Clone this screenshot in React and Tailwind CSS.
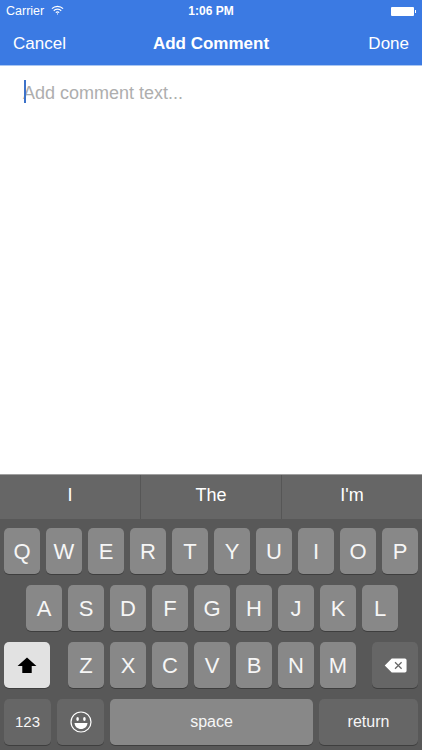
const rowOne = ["Q", "W", "E", "R", "T", "Y", "U", "I", "O", "P"]
const rowTwo = ["A", "S", "D", "F", "G", "H", "J", "K", "L"]
const rowThree = ["Z", "X", "C", "V", "B", "N", "M"]

function LetterKey({ label }) {
  return (
    <div className="w-[36px] h-[46px] rounded-[5px] bg-[#888888] shadow-[0_1px_0_#3e3e3e] flex items-center justify-center text-[#f6f6f6] text-[22px]">
      {label}
    </div>
  )
}

function StatusBar() {
  return (
    <div className="h-[22px] grid grid-cols-[1fr_auto_1fr] items-center text-white text-[12.5px] px-[6px]">
      <div className="flex items-center">
        <span>Carrier</span>
        <svg viewBox="0 0 14 10" className="w-[13px] h-[10px] ml-[7px] mb-[2px]" fill="none" stroke="white" strokeWidth="1.3">
          <path d="M1 3.6a8.4 8.4 0 0 1 12 0" />
          <path d="M3 5.8a5.6 5.6 0 0 1 8 0" />
          <path d="M5.2 7.8a2.6 2.6 0 0 1 3.6 0" />
          <circle cx="7" cy="9.2" r="0.6" fill="white" stroke="none" />
        </svg>
      </div>
      <span className="font-bold text-[12px]">1:06 PM</span>
      <div className="flex items-center justify-end">
        <div className="w-[23px] h-[9px] bg-white rounded-[1px]" />
        <div className="w-[1px] h-[3px] bg-white ml-[1px]" />
      </div>
    </div>
  )
}

export default function App() {
  return (
    <div className="w-[422px] h-[750px] overflow-hidden bg-white flex flex-col font-['Liberation_Sans',Arial,sans-serif]">
      <div className="bg-[#3b7ae3] h-[66px] border-b border-[#a9c6f2] shrink-0">
        <StatusBar />
        <div className="h-[43px] grid grid-cols-[1fr_auto_1fr] items-center px-[13px] text-white text-[17px]">
          <span>Cancel</span>
          <span className="font-bold">Add Comment</span>
          <span className="text-right">Done</span>
        </div>
      </div>

      <div className="flex-1 relative pl-[23px] pt-[16px] text-[#aeaeae] text-[18px] leading-[22px]">
        <div className="absolute left-[24px] top-[14px] w-[2px] h-[23px] bg-[#3d72c9]" />
        Add comment text...
      </div>

      <div className="h-[45px] shrink-0 bg-[#666666] border-t border-[#a0a0a0] pb-[3px] flex text-white text-[18px]">
        <div className="w-[141px] flex items-center justify-center border-r border-[#565656] -mb-[3px] pb-[3px]">I</div>
        <div className="w-[141px] flex items-center justify-center border-r border-[#565656] -mb-[3px] pb-[3px]">The</div>
        <div className="flex-1 flex items-center justify-center">I'm</div>
      </div>

      <div className="h-[231px] shrink-0 bg-[#585858] pt-[9px] px-[4px] flex flex-col gap-[11px]">
        <div className="flex justify-between">
          {rowOne.map((k) => (
            <LetterKey key={k} label={k} />
          ))}
        </div>
        <div className="flex justify-center gap-[6px] pl-[2px]">
          {rowTwo.map((k) => (
            <LetterKey key={k} label={k} />
          ))}
        </div>
        <div className="flex">
          <div className="w-[46px] h-[46px] rounded-[5px] bg-[#e2e2e2] shadow-[0_1px_0_#3e3e3e] flex items-center justify-center">
            <svg viewBox="0 0 20 18" className="w-[20px] h-[17px]" fill="black">
              <path d="M10 0.5 L20 9.5 H15 V17 H5 V9.5 H0 Z" />
            </svg>
          </div>
          <div className="flex gap-[6px] ml-[18px]">
            {rowThree.map((k) => (
              <LetterKey key={k} label={k} />
            ))}
          </div>
          <div className="w-[46px] h-[46px] ml-[16px] rounded-[5px] bg-[#666666] shadow-[0_1px_0_#3e3e3e] flex items-center justify-center">
            <svg viewBox="0 0 24 16" className="w-[23px] h-[15px]">
              <path d="M8 0.5 H22 a1.8 1.8 0 0 1 1.8 1.8 V13.7 a1.8 1.8 0 0 1 -1.8 1.8 H8 L0.5 8 Z" fill="white" />
              <path d="M11.5 4.5 L18.5 11.5 M18.5 4.5 L11.5 11.5" stroke="#666666" strokeWidth="1.3" />
            </svg>
          </div>
        </div>
        <div className="flex gap-[6px] text-[#f6f6f6]">
          <div className="w-[47px] h-[46px] rounded-[5px] bg-[#666666] shadow-[0_1px_0_#3e3e3e] flex items-center justify-center text-[15px]">
            123
          </div>
          <div className="w-[47px] h-[46px] rounded-[5px] bg-[#666666] shadow-[0_1px_0_#3e3e3e] flex items-center justify-center">
            <svg viewBox="0 0 22 22" className="w-[22px] h-[22px]" fill="none" stroke="white" strokeWidth="1.2">
              <circle cx="11" cy="11" r="10" />
              <ellipse cx="7.6" cy="8" rx="1.3" ry="1.9" fill="white" stroke="none" />
              <ellipse cx="14.4" cy="8" rx="1.3" ry="1.9" fill="white" stroke="none" />
              <path d="M4.5 12 H17.5 C17.2 15.8 14.5 18 11 18 C7.5 18 4.8 15.8 4.5 12 Z" fill="white" stroke="none" />
            </svg>
          </div>
          <div className="flex-1 h-[46px] rounded-[5px] bg-[#888888] shadow-[0_1px_0_#3e3e3e] flex items-center justify-center text-[16px]">
            space
          </div>
          <div className="w-[99px] h-[46px] rounded-[5px] bg-[#666666] shadow-[0_1px_0_#3e3e3e] flex items-center justify-center text-[16px]">
            return
          </div>
        </div>
      </div>
    </div>
  )
}
